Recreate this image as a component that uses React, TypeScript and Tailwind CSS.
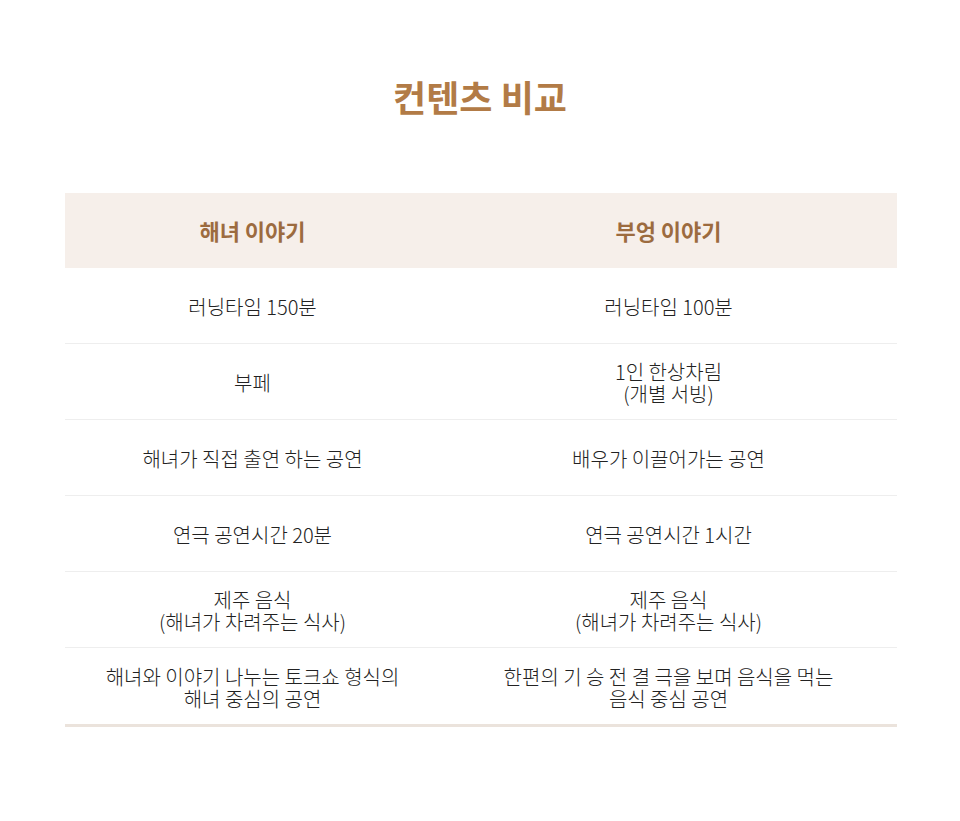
import React from "react";

type Row = { left: string[]; right: string[] };

const rows: Row[] = [
  { left: ["러닝타임 150분"], right: ["러닝타임 100분"] },
  { left: ["부페"], right: ["1인 한상차림", "(개별 서빙)"] },
  { left: ["해녀가 직접 출연 하는 공연"], right: ["배우가 이끌어가는 공연"] },
  { left: ["연극 공연시간 20분"], right: ["연극 공연시간 1시간"] },
  {
    left: ["제주 음식", "(해녀가 차려주는 식사)"],
    right: ["제주 음식", "(해녀가 차려주는 식사)"],
  },
  {
    left: ["해녀와 이야기 나누는 토크쇼 형식의", "해녀 중심의 공연"],
    right: ["한편의 기 승 전 결 극을 보며 음식을 먹는", "음식 중심 공연"],
  },
];

const Cell = ({ lines }: { lines: string[] }) => (
  <div className="flex flex-col items-center justify-center pr-[41px] pt-[3px] text-center text-[20px] leading-[22px] font-light text-[#222222]">
    {lines.map((l, i) => (
      <span key={i} className="whitespace-nowrap">
        {l}
      </span>
    ))}
  </div>
);

export default function App() {
  return (
    <div
      className="min-h-[821px] w-full bg-white"
      style={{ fontFamily: '"Noto Sans CJK KR", "Noto Sans", sans-serif' }}
    >
      <div className="flex justify-center pt-[70px]">
        <h1 className="text-[36px] leading-[52px] font-bold text-[#b27b46]">
          컨텐츠 비교
        </h1>
      </div>

      <div className="ml-[65px] mr-[63px] mt-[71px] border-b-[3px] border-[#ebe3dc]">
        <div className="grid h-[75px] grid-cols-2 bg-[#f6efea]">
          <div className="flex items-center justify-center pr-[41px] text-[22px] font-bold text-[#9c6b3f]">
            해녀 이야기
          </div>
          <div className="flex items-center justify-center pr-[41px] text-[22px] font-bold text-[#9c6b3f]">
            부엉 이야기
          </div>
        </div>
        {rows.map((r, i) => (
          <div
            key={i}
            className={`grid h-[76px] grid-cols-2 ${
              i < rows.length - 1 ? "border-b border-[#eeeeee]" : ""
            }`}
          >
            <Cell lines={r.left} />
            <Cell lines={r.right} />
          </div>
        ))}
      </div>
    </div>
  );
}
